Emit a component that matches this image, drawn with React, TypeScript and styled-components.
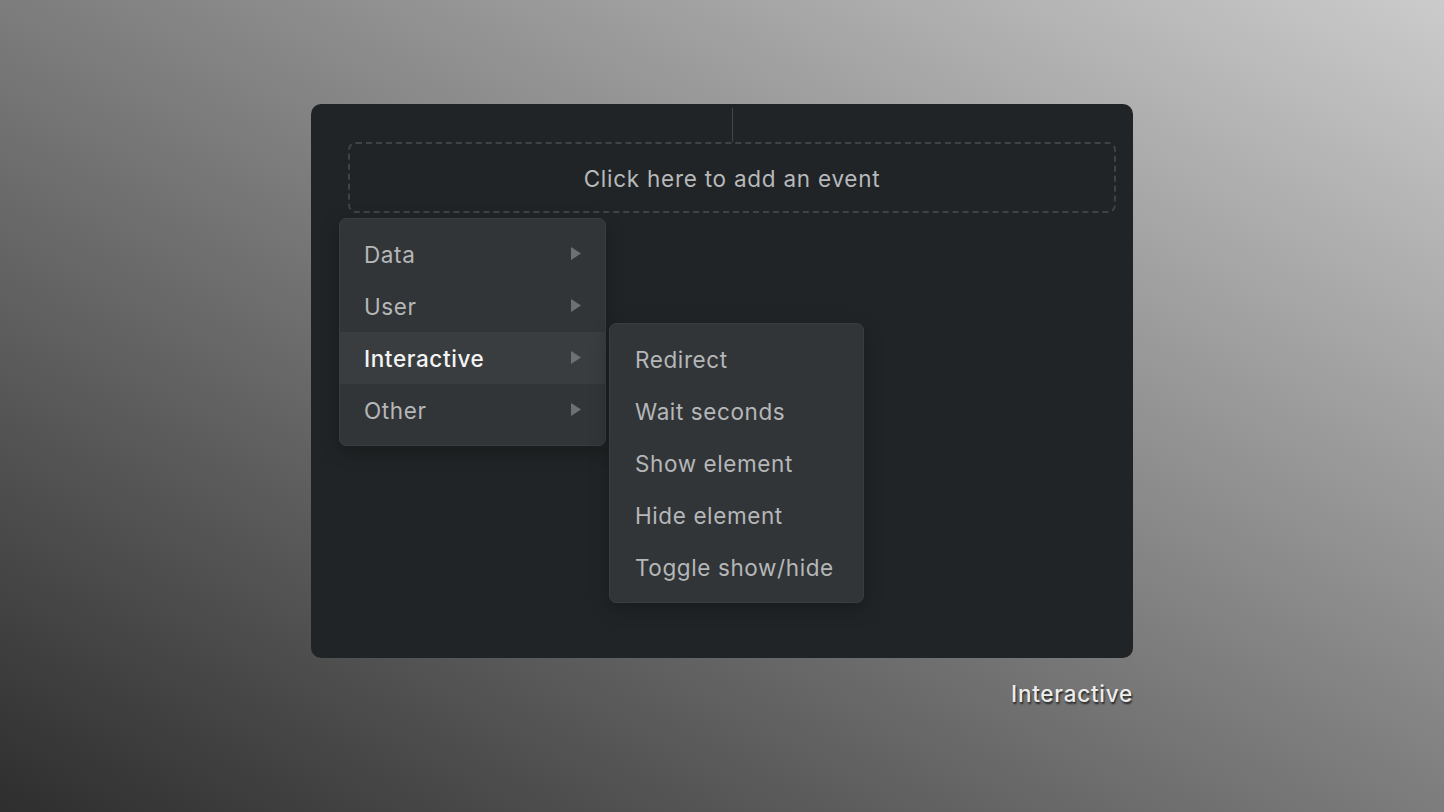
import React from "react";
import styled, { createGlobalStyle } from "styled-components";

const Global = createGlobalStyle`
  html, body { margin: 0; padding: 0; height: 100%; }
  body {
    background: linear-gradient(to top right, #2e2e2e 0%, #cbcbcb 100%);
    font-family: Inter, "Noto Sans", "Liberation Sans", sans-serif;
    -webkit-font-smoothing: antialiased;
  }
  #root { height: 100%; }
`;

const Stage = styled.div`
  height: 100vh;
  display: flex;
  align-items: center;
  justify-content: center;
`;

const Column = styled.div`
  display: flex;
  flex-direction: column;
  align-items: flex-end;
  gap: 22px;
  margin-top: -2px;
`;

const Card = styled.div`
  position: relative;
  width: 822px;
  height: 554px;
  box-sizing: border-box;
  background: #212426;
  border-radius: 10px;
  padding: 4px 17px 0 37px;
  display: flex;
  flex-direction: column;
  align-items: stretch;
`;

const Connector = styled.div`
  align-self: center;
  width: 1px;
  height: 34px;
  background: #44474a;
`;

const DropZone = styled.div`
  height: 71px;
  box-sizing: border-box;
  border: 2px dashed #404346;
  border-radius: 8px;
  padding-top: 2px;
  display: flex;
  align-items: center;
  justify-content: center;
  color: #b7b9bb;
  font-size: 22.5px;
  letter-spacing: 0.75px;
`;

const Menu = styled.div<{ $left: number; $top: number; $width: number }>`
  position: absolute;
  left: ${(p) => p.$left}px;
  top: ${(p) => p.$top}px;
  width: ${(p) => p.$width}px;
  box-sizing: border-box;
  padding: 9px 0;
  background: #323537;
  border: 1px solid #3a3d40;
  border-radius: 7px;
  box-shadow: 0 6px 18px rgba(0, 0, 0, 0.25);
  display: flex;
  flex-direction: column;
`;

const Item = styled.div<{ $active?: boolean; $pad: number }>`
  height: 52px;
  box-sizing: border-box;
  display: flex;
  align-items: center;
  justify-content: space-between;
  padding: 2px 24px 0 ${(p) => p.$pad}px;
  background: ${(p) => (p.$active ? "#3a3d3f" : "transparent")};
  color: ${(p) => (p.$active ? "#f4f4f4" : "#b5b7b9")};
  font-size: 22.5px;
  font-weight: ${(p) => (p.$active ? 500 : 400)};
  letter-spacing: 0.6px;
`;

const ArrowBox = styled.span`
  display: flex;
  margin-top: -2px;
`;

const Caption = styled.div`
  color: #ececec;
  font-size: 22.5px;
  font-weight: 500;
  text-shadow: 1px 2px 2px rgba(0, 0, 0, 0.7);
  letter-spacing: 0.75px;
`;

const Arrow = () => (
  <ArrowBox>
    <svg width="10" height="13" viewBox="0 0 10 13">
      <polygon points="0,0 10,6.5 0,13" fill="#6e7173" />
    </svg>
  </ArrowBox>
);

const categories = ["Data", "User", "Interactive", "Other"];
const actions = ["Redirect", "Wait seconds", "Show element", "Hide element", "Toggle show/hide"];

export default function App() {
  return (
    <>
      <Global />
      <Stage>
        <Column>
          <Card>
            <Connector />
            <DropZone>Click here to add an event</DropZone>
            <Menu $left={28} $top={114} $width={267}>
              {categories.map((c) => (
                <Item key={c} $pad={24} $active={c === "Interactive"}>
                  <span>{c}</span>
                  <Arrow />
                </Item>
              ))}
            </Menu>
            <Menu $left={298} $top={219} $width={255}>
              {actions.map((a) => (
                <Item key={a} $pad={25}>
                  <span>{a}</span>
                </Item>
              ))}
            </Menu>
          </Card>
          <Caption>Interactive</Caption>
        </Column>
      </Stage>
    </>
  );
}
